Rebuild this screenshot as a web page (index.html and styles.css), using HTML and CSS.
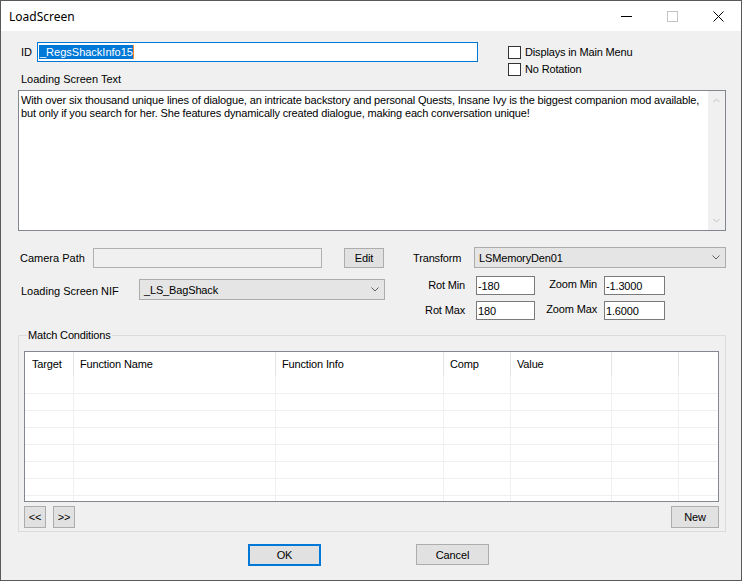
FILE: index.html
```html
<!DOCTYPE html>
<html>
<head>
    <meta charset="utf-8">
    <title>LoadScreen</title>
    <link rel="stylesheet" href="styles.css">
</head>
<body>
<div class="window">
    <div class="titlebar">
        <span class="title">LoadScreen</span>
        <div class="caption-btns">
            <span class="cap-btn"><svg width="11" height="11" viewBox="0 0 11 11"><line x1="0" y1="5.5" x2="11" y2="5.5" stroke="#000" stroke-width="1"/></svg></span>
            <span class="cap-btn"><svg width="11" height="11" viewBox="0 0 11 11"><rect x="0.5" y="0.5" width="10" height="10" fill="none" stroke="#c4c4c4" stroke-width="1"/></svg></span>
            <span class="cap-btn"><svg width="11" height="11" viewBox="0 0 11 11"><path d="M0.5 0.5 L10.5 10.5 M10.5 0.5 L0.5 10.5" stroke="#000" stroke-width="1"/></svg></span>
        </div>
    </div>
    <div class="client">
        <div class="top">
            <div class="top-left">
                <div class="id-row">
                    <span class="lbl id-lbl">ID</span>
                    <div class="textbox focused"><span class="sel">_RegsShackInfo15</span><span class="caret"></span></div>
                </div>
                <div class="lbl text-lbl">Loading Screen Text</div>
            </div>
            <div class="checks ms">
                <div class="check"><span class="box"></span>Displays in Main Menu</div>
                <div class="check"><span class="box"></span>No Rotation</div>
            </div>
        </div>

        <div class="memo">
            <div class="memo-text ms">With over six thousand unique lines of dialogue, an intricate backstory and personal Quests, Insane Ivy is the biggest companion mod available,<br>but only if you search for her. She features dynamically created dialogue, making each conversation unique!</div>
            <div class="vscroll">
                <svg width="7" height="5" viewBox="0 0 7 5"><path d="M0.5 4 L3.5 1 L6.5 4" fill="none" stroke="#c2c2c2"/></svg>
                <svg width="7" height="5" viewBox="0 0 7 5"><path d="M0.5 1 L3.5 4 L6.5 1" fill="none" stroke="#c2c2c2"/></svg>
            </div>
        </div>

        <div class="mid">
            <div class="mid-left">
                <div class="row cam-row">
                    <span class="lbl cam-lbl">Camera Path</span>
                    <div class="textbox disabled cam-box"></div>
                    <button class="btn ms edit-btn">Edit</button>
                </div>
                <div class="row nif-row">
                    <span class="lbl nif-lbl">Loading Screen NIF</span>
                    <div class="combo ms nif-combo">
                        <span>_LS_BagShack</span>
                        <svg width="8" height="5" viewBox="0 0 8 5"><path d="M0.5 0.5 L4 4 L7.5 0.5" fill="none" stroke="#606060"/></svg>
                    </div>
                </div>
            </div>
            <div class="mid-right">
                <div class="row tf-row">
                    <span class="ms tf-lbl">Transform</span>
                    <div class="combo ms tf-combo">
                        <span>LSMemoryDen01</span>
                        <svg width="8" height="5" viewBox="0 0 8 5"><path d="M0.5 0.5 L4 4 L7.5 0.5" fill="none" stroke="#606060"/></svg>
                    </div>
                </div>
                <div class="rot-grid ms">
                    <span class="rlbl">Rot Min</span>
                    <div class="textbox num">-180</div>
                    <span class="zlbl">Zoom Min</span>
                    <div class="textbox num">-1.3000</div>
                    <span class="rlbl">Rot Max</span>
                    <div class="textbox num">180</div>
                    <span class="zlbl">Zoom Max</span>
                    <div class="textbox num">1.6000</div>
                </div>
            </div>
        </div>

        <fieldset class="group">
            <legend class="ms">Match Conditions</legend>
            <div class="listview ms">
                <div class="lv-head">
                    <span>Target</span><span>Function Name</span><span>Function Info</span><span>Comp</span><span>Value</span><span></span><span></span>
                </div>
                <div class="lv-row"><span></span><span></span><span></span><span></span><span></span><span></span><span></span></div>
                <div class="lv-row"><span></span><span></span><span></span><span></span><span></span><span></span><span></span></div>
                <div class="lv-row"><span></span><span></span><span></span><span></span><span></span><span></span><span></span></div>
                <div class="lv-row"><span></span><span></span><span></span><span></span><span></span><span></span><span></span></div>
                <div class="lv-row"><span></span><span></span><span></span><span></span><span></span><span></span><span></span></div>
                <div class="lv-row"><span></span><span></span><span></span><span></span><span></span><span></span><span></span></div>
                <div class="lv-row"><span></span><span></span><span></span><span></span><span></span><span></span><span></span></div>
                <div class="lv-row"><span></span><span></span><span></span><span></span><span></span><span></span><span></span></div>
            </div>
            <div class="lv-btns">
                <button class="btn ms nav-btn">&lt;&lt;</button>
                <button class="btn ms nav-btn">&gt;&gt;</button>
                <button class="btn ms new-btn">New</button>
            </div>
        </fieldset>

        <div class="dlg-btns">
            <button class="btn ms ok-btn">OK</button>
            <button class="btn ms cancel-btn">Cancel</button>
        </div>
    </div>
</div>
</body>
</html>
```

FILE: styles.css
```css
* {
    box-sizing: border-box;
}

body {
    margin: 0;
    background: #fff;
}

.window {
    width: 742px;
    height: 581px;
    border: 1px solid #595959;
    background: #f0f0f0;
    display: flex;
    flex-direction: column;
    font-family: "Liberation Sans", Arial, sans-serif;
    font-size: 11px;
    color: #000;
}

/* narrow dialog font used by most controls */
.ms {
    font-family: "Liberation Sans", Arial, sans-serif;
    font-size: 11px;
    letter-spacing: -0.15px;
}

/* title bar */
.titlebar {
    height: 30px;
    background: #fff;
    display: flex;
    align-items: center;
}

.title {
    flex: 1;
    padding-left: 8px;
    font-family: "Noto Sans", "Open Sans", sans-serif;
    font-size: 12px;
}

.caption-btns {
    display: flex;
    align-self: stretch;
}

.cap-btn {
    width: 46px;
    display: flex;
    align-items: center;
    justify-content: center;
}

.cap-btn svg {
    display: block;
}

/* client area */
.client {
    flex: 1;
    padding: 11px 0 0 17px;
}

.lbl {
    line-height: 13px;
}

.top {
    display: flex;
    align-items: flex-start;
}

.top-left {
    width: 460px;
    padding-left: 3px;
}

.id-row {
    display: flex;
    align-items: center;
    height: 20px;
}

.id-lbl {
    width: 16px;
}

.textbox {
    border: 1px solid #7a7a7a;
    background: #fff;
    display: flex;
    align-items: center;
    padding-left: 1px;
    white-space: nowrap;
}

.textbox.focused {
    width: 441px;
    height: 20px;
    border-color: #0078d7;
}

.sel {
    background: #0078d7;
    color: #fff;
    line-height: 14px;
    padding: 0 0 0 1px;
}

.caret {
    width: 1px;
    height: 14px;
    background: #ff8a28;
}

.text-lbl {
    margin-top: 11px;
}

.checks {
    margin-left: 30px;
    margin-top: 2px;
}

.check {
    display: flex;
    align-items: center;
    height: 17px;
    line-height: 13px;
}

.box {
    width: 13px;
    height: 13px;
    border: 1px solid #333;
    background: #fff;
    margin-right: 4px;
}

/* loading screen text */
.memo {
    margin-top: 4px;
    width: 708px;
    height: 141px;
    border: 1px solid #828790;
    background: #fff;
    display: flex;
}

.memo-text {
    flex: 1;
    min-width: 0;
    overflow: hidden;
    padding: 3px 2px;
    line-height: 13px;
    white-space: nowrap;
}

.vscroll {
    width: 17px;
    flex: none;
    background: #f0f0f0;
    display: flex;
    flex-direction: column;
    justify-content: space-between;
    align-items: center;
    padding: 7px 0 7px;
}

/* camera / nif / transform */
.mid {
    display: flex;
    margin-top: 16px;
}

.mid-left {
    width: 395px;
}

.row {
    display: flex;
    align-items: center;
}

.cam-row {
    margin-top: 1px;
}

.cam-lbl {
    width: 75px;
    padding-left: 2px;
}

.textbox.disabled {
    background: #f0f0f0;
    border-color: #b0b0b0;
}

.cam-box {
    width: 229px;
    height: 20px;
}

.btn {
    background: #e1e1e1;
    border: 1px solid #adadad;
    padding: 0;
    color: #000;
    text-align: center;
}

.edit-btn {
    margin-left: 22px;
    width: 40px;
    height: 20px;
}

.nif-row {
    margin-top: 11px;
}

.nif-lbl {
    width: 121px;
    padding-left: 3px;
    padding-top: 3px;
}

.combo {
    height: 21px;
    border: 1px solid #acacac;
    background: #e5e5e5;
    display: flex;
    align-items: center;
    justify-content: space-between;
    padding: 0 5px 0 4px;
}

.combo svg {
    display: block;
}

.nif-combo {
    width: 246px;
}

.tf-lbl {
    width: 61px;
}

.tf-combo {
    width: 252px;
}

.rot-grid {
    margin-top: 8px;
    display: grid;
    grid-template-columns: 63px 59px 69px 61px;
    grid-auto-rows: 19px;
    row-gap: 6px;
}

.rlbl, .zlbl {
    text-align: right;
    line-height: 19px;
}

.rlbl {
    padding-right: 11px;
}

.zlbl {
    padding-right: 7px;
    line-height: 17px;
}

.textbox.num {
    height: 19px;
}

/* match conditions */
.group {
    margin: 9px 0 0;
    padding: 0 6px 3px 5px;
    width: 708px;
    min-width: 0;
    border: 1px solid #dcdcdc;
}

.group legend {
    margin-left: 3px;
    padding: 0 1px;
    line-height: 13px;
}

.listview {
    margin-top: 9px;
    height: 151px;
    border: 1px solid #828790;
    background: #fff;
    overflow: hidden;
}

.lv-head, .lv-row {
    display: grid;
    grid-template-columns: 49px 202px 168px 67px 101px 67px 39px;
}

.lv-head {
    height: 25px;
}

.lv-head span {
    border-right: 1px solid #e5e5e5;
    padding-left: 6px;
    line-height: 25px;
}

.lv-head span:first-child {
    padding-left: 7px;
}

.lv-row {
    height: 17px;
    border-bottom: 1px solid #f0f0f0;
}

.lv-row span {
    border-right: 1px solid #f0f0f0;
}

.lv-head span:last-child, .lv-row span:last-child {
    border-right: none;
}

.lv-btns {
    display: flex;
    margin-top: 4px;
}

.nav-btn {
    width: 22px;
    height: 22px;
    margin-right: 7px;
}

.new-btn {
    margin-left: auto;
    width: 48px;
    height: 22px;
}

/* dialog buttons */
.dlg-btns {
    display: flex;
    margin-top: 12px;
}

.ok-btn {
    margin-left: 230px;
    width: 73px;
    height: 22px;
    border: 2px solid #0078d7;
}

.cancel-btn {
    margin-left: 95px;
    width: 73px;
    height: 21px;
}
```
